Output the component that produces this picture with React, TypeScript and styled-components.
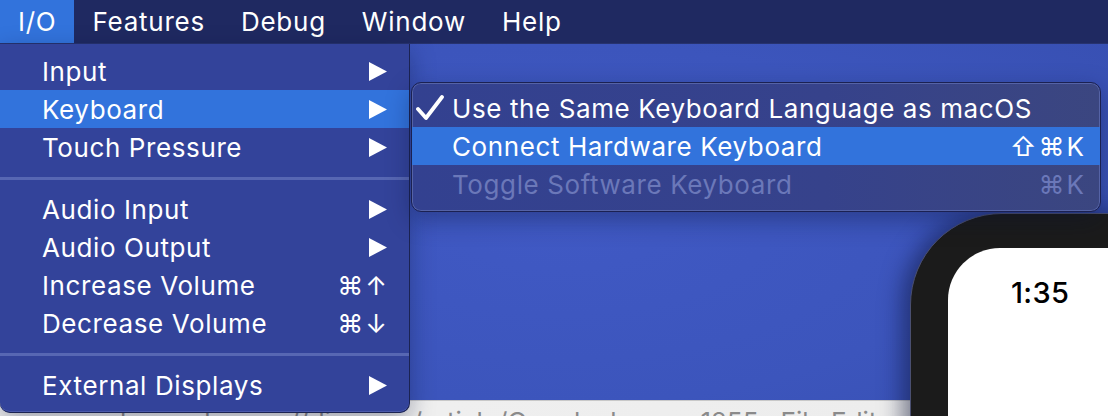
import React from 'react'
import styled, { createGlobalStyle, css } from 'styled-components'

const GlobalStyle = createGlobalStyle`
  html, body {
    margin: 0;
    padding: 0;
    background: #3d56be;
    overflow: hidden;
  }
  * {
    box-sizing: border-box;
  }
`

const Screen = styled.div`
  position: relative;
  width: 1108px;
  height: 416px;
  overflow: hidden;
  display: flex;
  flex-direction: column;
  font-family: Inter, 'Noto Sans', 'DejaVu Sans', sans-serif;
  -webkit-font-smoothing: antialiased;
`

const MenuBar = styled.div`
  display: flex;
  height: 44px;
  flex-shrink: 0;
  background: #1f2961;
  border-bottom: 1px solid #27336f;
`

const BarItem = styled.div<{ $active?: boolean }>`
  display: flex;
  align-items: center;
  padding: 0 18px;
  font-size: 26px;
  color: #ffffff;
  letter-spacing: 0.75px;
  background: ${({ $active }) => ($active ? '#3273dc' : 'transparent')};
`

const Desktop = styled.div`
  flex: 1;
  display: flex;
  flex-direction: column;
  background: radial-gradient(ellipse 700px 300px at 560px 180px, #4059c4 0%, #3c55bc 60%, #3850b3 100%);
`

const Spacer = styled.div`
  flex: 1;
`

const BrowserStrip = styled.div`
  height: 16px;
  background: linear-gradient(90deg, #f1f1f1 0%, #ededed 80%, #d6d6d6 97%, #bdbdbd 100%);
  overflow: hidden;
  padding-left: 120px;
  font-size: 26px;
  line-height: 1;
  color: #8a8a8a;
  white-space: nowrap;
  padding-top: 8px;
  border-top: 1px solid #c8c8c8;
`

const Menu = styled.div`
  position: absolute;
  left: 0;
  top: 44px;
  width: 410px;
  padding: 8px 0;
  background: #33439a;
  border-right: 1px solid #1b2352;
  border-bottom: 1px solid #1b2352;
  border-radius: 0 0 10px 10px;
  box-shadow: 0 8px 24px rgba(10, 16, 50, 0.35), inset 0 -1px 0 #4a59ab;
`

const SubMenu = styled.div`
  position: absolute;
  left: 411px;
  top: 82px;
  width: 690px;
  padding: 6px 0 8px;
  background: linear-gradient(90deg, #334190 0%, #36428b 60%, #3b4680 100%);
  border: 1px solid #1b2152;
  border-radius: 10px;
  box-shadow: inset 0 0 0 1px #5563a6, 0 8px 24px rgba(10, 16, 50, 0.35);
`

const Row = styled.div<{ $highlight?: boolean; $disabled?: boolean; $sub?: boolean }>`
  display: flex;
  align-items: center;
  height: 38px;
  padding: ${({ $sub }) => ($sub ? '0 16px 0 3px' : '0 22px 0 42px')};
  font-size: 26px;
  letter-spacing: 0.6px;
  color: ${({ $disabled }) => ($disabled ? '#6b78b9' : '#ffffff')};
  ${({ $highlight }) =>
    $highlight &&
    css`
      background: #3273dc;
    `}
`

const Check = styled.span`
  width: 37px;
  flex-shrink: 0;
  display: flex;
  justify-content: flex-start;
`

const Label = styled.span`
  flex: 1;
  white-space: nowrap;
`

const Shortcut = styled.span`
  font-size: 26px;
  letter-spacing: 2px;
  margin-right: -2px;
  font-family: Inter, 'DejaVu Sans', sans-serif;
  white-space: nowrap;
`

const Separator = styled.div`
  height: 24px;
  display: flex;
  align-items: center;

  &::after {
    content: '';
    flex: 1;
    height: 3px;
    background: #5767b3;
  }
`

const Phone = styled.div`
  position: absolute;
  left: 910px;
  top: 213px;
  width: 260px;
  height: 300px;
  background: #1b1b1b;
  border-radius: 92px 0 0 0;
  border: 1px solid #4a4f70;
  padding: 34px 0 0 37px;
  box-shadow: -8px 0 22px rgba(10, 16, 50, 0.5);
`

const PhoneScreen = styled.div`
  height: 100%;
  background: #ffffff;
  border-radius: 52px 0 0 0;
  padding: 27px 0 0 63px;
`

const Clock = styled.div`
  font-family: Inter, 'Liberation Sans', sans-serif;
  font-size: 29px;
  font-weight: 500;
  color: #000000;
  letter-spacing: 0.3px;
`

const Arrow = () => (
  <svg width="18" height="19" viewBox="0 0 18 19">
    <polygon points="0,0 18,9.5 0,19" fill="#ffffff" />
  </svg>
)

const CheckMark = () => (
  <svg width="30" height="26" viewBox="0 0 30 26">
    <path d="M3 14 L11 23 L27 2" fill="none" stroke="#ffffff" strokeWidth="3.8" strokeLinecap="round" strokeLinejoin="round" />
  </svg>
)

type Item = { label: string; arrow?: boolean; shortcut?: string; highlight?: boolean } | 'sep'

const mainItems: Item[] = [
  { label: 'Input', arrow: true },
  { label: 'Keyboard', arrow: true, highlight: true },
  { label: 'Touch Pressure', arrow: true },
  'sep',
  { label: 'Audio Input', arrow: true },
  { label: 'Audio Output', arrow: true },
  { label: 'Increase Volume', shortcut: '⌘↑' },
  { label: 'Decrease Volume', shortcut: '⌘↓' },
  'sep',
  { label: 'External Displays', arrow: true },
]

const App = () => (
  <>
    <GlobalStyle />
    <Screen>
      <MenuBar>
        <BarItem $active>I/O</BarItem>
        <BarItem>Features</BarItem>
        <BarItem>Debug</BarItem>
        <BarItem>Window</BarItem>
        <BarItem>Help</BarItem>
      </MenuBar>
      <Desktop>
        <Spacer />
        <BrowserStrip>learn.chrome://discover/article/Googlechrome-1255 · File Edit</BrowserStrip>
      </Desktop>

      <Phone>
        <PhoneScreen>
          <Clock>1:35</Clock>
        </PhoneScreen>
      </Phone>

      <Menu>
        {mainItems.map((item, i) =>
          item === 'sep' ? (
            <Separator key={i} />
          ) : (
            <Row key={i} $highlight={item.highlight}>
              <Label>{item.label}</Label>
              {item.arrow && <Arrow />}
              {item.shortcut && <Shortcut>{item.shortcut}</Shortcut>}
            </Row>
          )
        )}
      </Menu>

      <SubMenu>
        <Row $sub>
          <Check>
            <CheckMark />
          </Check>
          <Label>Use the Same Keyboard Language as macOS</Label>
        </Row>
        <Row $sub $highlight>
          <Check />
          <Label>Connect Hardware Keyboard</Label>
          <Shortcut>⇧⌘K</Shortcut>
        </Row>
        <Row $sub $disabled>
          <Check />
          <Label>Toggle Software Keyboard</Label>
          <Shortcut>⌘K</Shortcut>
        </Row>
      </SubMenu>
    </Screen>
  </>
)

export default App
